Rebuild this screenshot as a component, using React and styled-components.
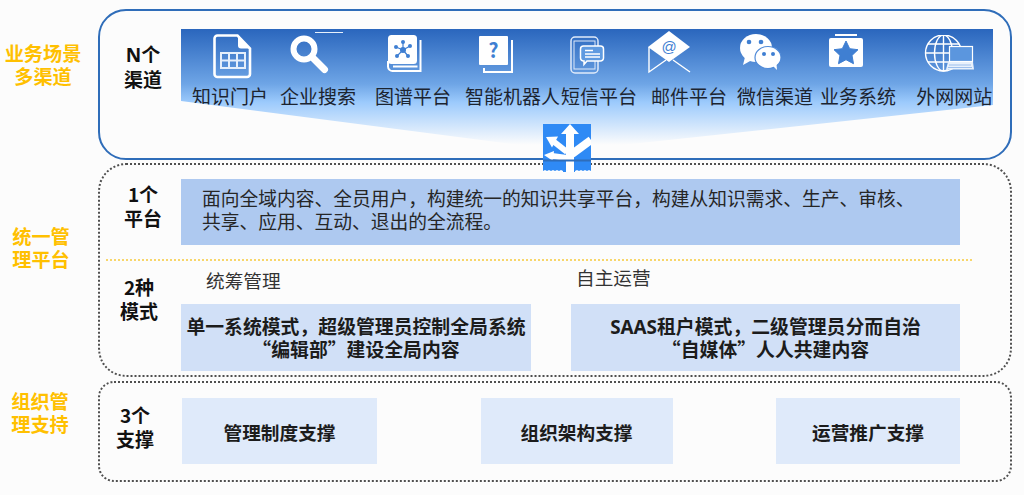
import React from "react"
import styled, { createGlobalStyle } from "styled-components"

const GlobalStyle = createGlobalStyle`
  html, body {
    margin: 0;
    background: #fcfcfc;
  }
  body {
    font-family: "Noto Sans CJK SC", "Noto Sans", sans-serif;
    color: #1c1c1c;
  }
`

const Page = styled.div`
  width: 1024px;
  height: 495px;
  padding-top: 9px;
  box-sizing: border-box;
  overflow: hidden;
`

const Row = styled.div`
  display: grid;
  grid-template-columns: 98px 914px;
  margin-top: ${({ $gap }) => $gap || 0}px;
`

const SceneLabel = styled.div`
  margin-top: ${({ $top }) => $top}px;
  padding-right: ${({ $right }) => $right}px;
  font-size: 19.2px;
  font-weight: 700;
  line-height: 23px;
  color: #ffc000;
  text-align: center;
`

const ChannelPanel = styled.div`
  position: relative;
  z-index: 1;
  height: 151px;
  box-sizing: border-box;
  display: flex;
  align-items: flex-start;
  border: 2.5px solid #2f6db9;
  border-radius: 28px;
`

const DottedPanel = styled.div`
  height: ${({ $height }) => $height}px;
  box-sizing: border-box;
  padding-top: ${({ $pad }) => $pad || 0}px;
  border: 2px dotted #4f4f4f;
  border-radius: ${({ $radius }) => $radius}px;
`

const SideLabel = styled.div`
  flex: 0 0 81px;
  box-sizing: border-box;
  margin-top: ${({ $top }) => $top}px;
  padding-left: ${({ $left }) => $left || 0}px;
  padding-right: ${({ $right }) => $right || 0}px;
  font-size: 19px;
  font-weight: 700;
  line-height: 24px;
  text-align: center;
  color: #111;
  white-space: nowrap;
`

const Latin = styled.span`
  font-family: "Noto Sans", sans-serif;
`

const Band = styled.div`
  flex: 0 0 812px;
  height: 122px;
  margin-top: 18px;
  box-sizing: border-box;
  padding-left: 11px;
  display: flex;
  background: linear-gradient(180deg, #2a66bd 0%, #6ea5e6 45%, #9ccafc 60%, #fcfcfc 95%);
  clip-path: polygon(0 0, 100% 0, 100% 76px, 385px 100%, 0 72px);
`

const Channel = styled.div`
  flex: none;
  margin-left: ${({ $gap }) => $gap}px;
  display: flex;
  flex-direction: column;
`

const IconSlot = styled.div`
  height: 55px;
  padding-left: ${({ $left }) => Math.max($left, 0)}px;
  margin-left: ${({ $left }) => Math.min($left, 0)}px;
`

const ChannelName = styled.div`
  font-size: 19px;
  line-height: 24px;
  color: #1c2430;
  white-space: nowrap;
`

const Svg = styled.svg`
  display: block;
  margin-top: ${({ $top }) => $top || 0}px;
`

const SplitTile = styled.svg`
  position: absolute;
  left: 442.5px;
  top: 112.5px;
`

const PlatformRow = styled.div`
  display: flex;
  align-items: flex-start;
`

const PlatformBox = styled.div`
  width: 779px;
  height: 66px;
  box-sizing: border-box;
  padding: 7px 0 0 21px;
  background: #aec9f0;
  font-size: 18.75px;
  line-height: 23px;
  color: #262626;
  white-space: nowrap;
`

const Divider = styled.div`
  width: 866px;
  margin: 14px 0 0 6px;
  border-top: 2px dotted #f8d66a;
`

const Modes = styled.div`
  display: flex;
  gap: 40px;
  height: 110px;
`

const Mode = styled.div`
  width: ${({ $width }) => $width}px;
  display: flex;
  flex-direction: column;
`

const ModeTitle = styled.div`
  margin: ${({ $top }) => $top}px 0 0 ${({ $left }) => $left}px;
  font-size: 18.67px;
  line-height: 24px;
  color: #333;
`

const ModeBox = styled.div`
  margin-top: auto;
  height: 67px;
  display: flex;
  flex-direction: column;
  justify-content: center;
  background: #d1e0f7;
  font-size: 18.85px;
  font-weight: 700;
  line-height: 22.5px;
  text-align: center;
  white-space: nowrap;
`

const Supports = styled.div`
  flex: 0 0 778px;
  margin-left: 1px;
  display: flex;
  justify-content: space-between;
`

const Support = styled.div`
  width: ${({ $width }) => $width}px;
  height: 66px;
  display: flex;
  align-items: center;
  justify-content: center;
  background: #dfeafa;
  font-size: 18.67px;
  font-weight: 700;
`

const BLUE = "#3f7fd2"

const DocIcon = () => (
  <Svg width="40" height="45" viewBox="0 0 40 45" $top={5}>
    <path d="M4.5 1.500h20l12.500 13v25.500a3 3 0 0 1-3 3H4.500a3 3 0 0 1-3-3V4.500a3 3 0 0 1 3-3z" fill="none" stroke="#fff" strokeWidth="2.600" />
    <path d="M25 2v9.500a3 3 0 0 0 3 3h9z" fill="#fff" />
    <path d="M8 19h24v15H8zM16 19v15M24 19v15M8 26.500h24" fill="none" stroke="#e4eefb" strokeWidth="2" />
  </Svg>
)

const SearchIcon = () => (
  <Svg width="56" height="46" viewBox="0 0 56 46">
    <path d="M25 3.500h28" stroke="#e6f0fc" strokeWidth="1" />
    <circle cx="14" cy="20" r="10.500" fill="none" stroke="#fff" strokeWidth="6" />
    <path d="M24 30l10.500 10.500" stroke="#fff" strokeWidth="7" strokeLinecap="round" />
  </Svg>
)

const BookIcon = () => (
  <Svg width="36" height="38" viewBox="0 0 36 38" $top={6}>
    <rect x="1" y="0" width="29" height="29" rx="3.500" fill="#fff" />
    <path d="M33.500 5v31H6a4.500 4.500 0 0 1-5-4.500V26M6 31.500h24.500" fill="none" stroke="#fff" strokeWidth="2" />
    <path d="M16 15L9 12M16 15L16 7M16 15L23 11M16 15L10 21M16 15L21 21" stroke={BLUE} strokeWidth="1.200" />
    <g fill={BLUE}>
      <circle cx="16" cy="15" r="3" />
      <circle cx="9" cy="12" r="2" />
      <circle cx="16" cy="7" r="2" />
      <circle cx="23" cy="11" r="2" />
      <circle cx="10" cy="21" r="2" />
      <circle cx="21" cy="21" r="2" />
    </g>
  </Svg>
)

const HelpIcon = () => (
  <Svg width="35" height="38" viewBox="0 0 35 38" $top={7}>
    <rect width="29" height="29" rx="1" fill="#fff" />
    <path d="M33 4v32H5v-4" fill="none" stroke="#fff" strokeWidth="2" />
    <text x="14.500" y="22" textAnchor="middle" fontSize="20" fontWeight="700" fill={BLUE}>?</text>
  </Svg>
)

const PhoneIcon = () => (
  <Svg width="36" height="39" viewBox="0 0 36 39" $top={7}>
    <rect x="1" y="1" width="27" height="36" rx="4" fill="none" stroke="#dfeafa" strokeWidth="1.500" />
    <rect x="4" y="5" width="21" height="28" fill="none" stroke="#dfeafa" strokeWidth="1" />
    <path d="M13.500 10h17a3 3 0 0 1 3 3v9a3 3 0 0 1-3 3H17l-3 3.500V25h-.500a3 3 0 0 1-3-3v-9a3 3 0 0 1 3-3z" fill="#5f9ae0" stroke="#fff" strokeWidth="1.500" />
    <path d="M15 14.500h8M15 18h15M15 21h15" stroke="#fff" strokeWidth="1.300" />
  </Svg>
)

const MailIcon = () => (
  <Svg width="44" height="44" viewBox="0 0 44 44" $top={2}>
    <path d="M21 0L42 16 21 31 0 16z" fill="#fff" />
    <path d="M1 16v25l17-12M25 29l17 12" fill="none" stroke="#fff" strokeWidth="1.400" />
    <text x="21" y="21" textAnchor="middle" fontSize="15" fontFamily="Liberation Sans, sans-serif" fill={BLUE}>@</text>
  </Svg>
)

const WechatIcon = () => (
  <Svg width="41" height="38" viewBox="0 0 41 38" $top={4}>
    <ellipse cx="16" cy="15" rx="16" ry="14" fill="#fff" />
    <path d="M5 24L3 32l9-5z" fill="#fff" />
    <ellipse cx="28" cy="24.500" rx="13" ry="11" fill="#fff" stroke="#4f8ad8" strokeWidth="1.200" />
    <path d="M33 33l4 4-.500-6z" fill="#fff" />
    <g fill={BLUE}>
      <circle cx="9" cy="9" r="2.300" />
      <circle cx="21" cy="9" r="2.300" />
      <circle cx="24" cy="21" r="2" />
      <circle cx="33" cy="21" r="2" />
    </g>
  </Svg>
)

const StarIcon = () => (
  <Svg width="35" height="34" viewBox="0 0 35 34" $top={5}>
    <rect x="6" y="0" width="22" height="2" fill="#fff" />
    <rect x="0" y="4" width="34" height="29" rx="2" fill="#fff" />
    <path d="M17 7l3.700 7.700 8.300 1-6 5.700 1.500 8.300-7.500-4-7.500 4 1.500-8.300-6-5.700 8.300-1z" fill={BLUE} stroke={BLUE} strokeLinejoin="round" />
  </Svg>
)

const GlobeIcon = () => (
  <Svg width="50" height="38" viewBox="0 0 50 38" $top={6}>
    <g fill="none" stroke="#fff" strokeWidth="1.400">
      <circle cx="19.500" cy="18" r="18" />
      <ellipse cx="19.500" cy="18" rx="9" ry="18" />
      <path d="M19.500 0v36M1.500 18h36M4 9h31M4 27h31" />
    </g>
    <rect x="25.500" y="11.500" width="23" height="15" fill="#5b96de" stroke="#fff" strokeWidth="1.200" />
    <path d="M24 27h25l1 7.500H22z" fill="#e8f1fc" />
    <path d="M25 30h22M24 32.500h24" stroke="#8ab4e8" strokeWidth="0.800" />
  </Svg>
)

const channels = [
  { name: "知识门户", gap: 0, left: 21, Icon: DocIcon },
  { name: "企业搜索", gap: 12, left: 10, Icon: SearchIcon },
  { name: "图谱平台", gap: 19, left: 12, Icon: BookIcon },
  { name: "智能机器人", gap: 14, left: 14, Icon: HelpIcon },
  { name: "短信平台", gap: 1, left: 9, Icon: PhoneIcon },
  { name: "邮件平台", gap: 14, left: -3, Icon: MailIcon },
  { name: "微信渠道", gap: 10, left: 3, Icon: WechatIcon },
  { name: "业务系统", gap: 7, left: 9, Icon: StarIcon },
  { name: "外网网站", gap: 20, left: 8, Icon: GlobeIcon },
]

const App = () => {
  return (
    <Page>
      <GlobalStyle />
      <Row>
        <SceneLabel $top={33} $right={12}>业务场景<br />多渠道</SceneLabel>
        <ChannelPanel>
          <SideLabel $top={31} $left={5}><Latin>N</Latin>个<br />渠道</SideLabel>
          <Band>
            {channels.map(({ name, gap, left, Icon }) => (
              <Channel key={name} $gap={gap}>
                <IconSlot $left={left}><Icon /></IconSlot>
                <ChannelName>{name}</ChannelName>
              </Channel>
            ))}
          </Band>
          <SplitTile width="48" height="48" viewBox="0 0 48 48">
            <rect width="48" height="48" fill="#2f8af5" />
            <path d="M27 0l9 10h-5v38h-8V10h-5z" fill="#fff" />
            <path d="M10 17l14 11" stroke="#fff" strokeWidth="6" />
            <path d="M3 13l12-.500-6 11z" fill="#fff" />
            <path d="M9 32l15 2" stroke="#fff" strokeWidth="6" />
            <path d="M1 31l10-4-1 10z" fill="#fff" />
            <path d="M29 30l19-14" stroke="#fff" strokeWidth="8" />
            <rect y="35.500" width="48" height="2" fill="#2f6db9" />
            <path d="M0 48v-1l2-1 2 1 2-1 2 1 2-1 2 1 2-1 2 1 2-1 2 1v1zM32 48v-1l2-1 2 1 2-1 2 1 2-1 2 1 2-1 2 1v1z" fill="#fff" />
          </SplitTile>
        </ChannelPanel>
      </Row>
      <Row $gap={3}>
        <SceneLabel $top={62} $right={16}>统一管<br />理平台</SceneLabel>
        <DottedPanel $height={214} $radius={28} $pad={14}>
          <PlatformRow>
            <SideLabel $top={3} $left={5}>1个<br />平台</SideLabel>
            <PlatformBox>
              面向全域内容、全员用户，构建统一的知识共享平台，构建从知识需求、生产、审核、<br />
              共享、应用、互动、退出的全流程。
            </PlatformBox>
          </PlatformRow>
          <Divider />
          <PlatformRow>
            <SideLabel $top={14} $right={3}>2种<br />模式</SideLabel>
            <Modes>
              <Mode $width={350}>
                <ModeTitle $top={7} $left={25}>统筹管理</ModeTitle>
                <ModeBox>
                  <div>单一系统模式，超级管理员控制全局系统</div>
                  <div>“编辑部”建设全局内容</div>
                </ModeBox>
              </Mode>
              <Mode $width={389}>
                <ModeTitle $top={4} $left={5}>自主运营</ModeTitle>
                <ModeBox>
                  <div><Latin>SAAS</Latin>租户模式，二级管理员分而自治</div>
                  <div>“自媒体”人人共建内容</div>
                </ModeBox>
              </Mode>
            </Modes>
          </PlatformRow>
        </DottedPanel>
      </Row>
      <Row $gap={4}>
        <SceneLabel $top={9} $right={18}>组织管<br />理支持</SceneLabel>
        <DottedPanel $height={101} $radius={16} $pad={15}>
          <PlatformRow>
            <SideLabel $top={5} $right={11}>3个<br />支撑</SideLabel>
            <Supports>
              <Support $width={195}>管理制度支撑</Support>
              <Support $width={192}>组织架构支撑</Support>
              <Support $width={184}>运营推广支撑</Support>
            </Supports>
          </PlatformRow>
        </DottedPanel>
      </Row>
    </Page>
  )
}

export default App
